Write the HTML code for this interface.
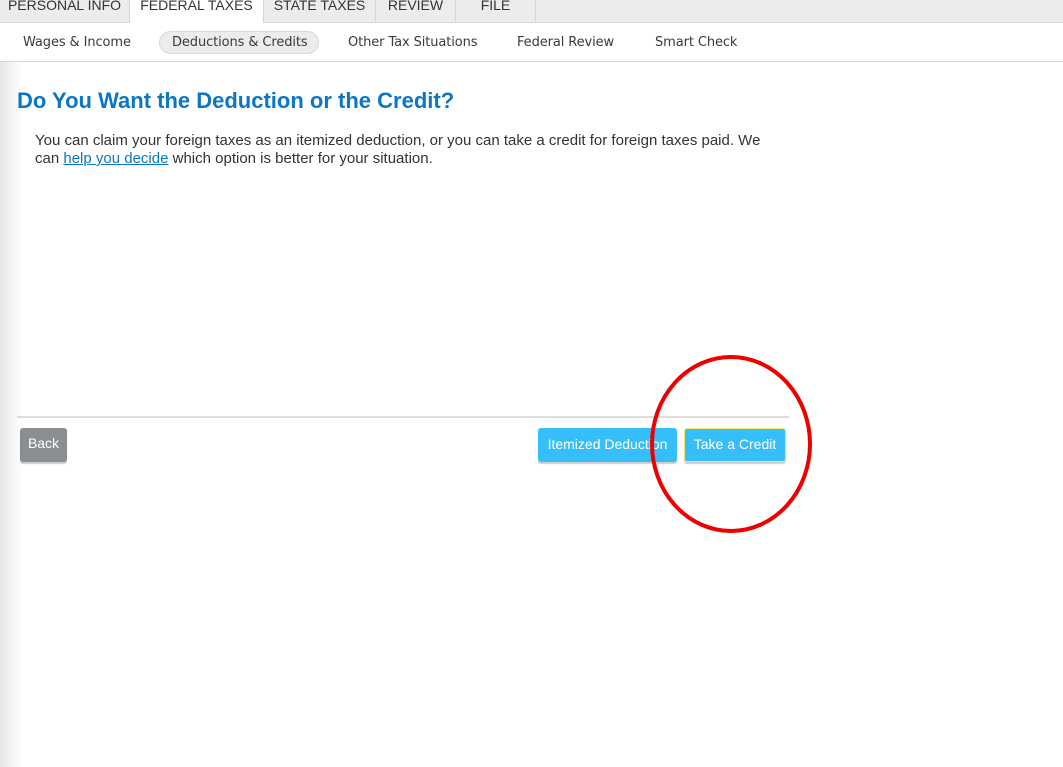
<!DOCTYPE html>
<html><head><meta charset="utf-8"><style>
*{margin:0;padding:0;box-sizing:border-box}
body{width:1063px;height:767px;background:#fff;position:relative;overflow:hidden;font-family:"Liberation Sans",Arial,sans-serif;}
.shade{position:absolute;left:0;top:62px;width:22px;height:705px;background:linear-gradient(to right,#e6e6e6,#fff)}
.topbar{position:absolute;left:0;top:0;width:1063px;height:23px;background:#ececec;border-bottom:1px solid #dcdcdc}
.tab{position:absolute;top:0;height:23px;font-size:14px;color:#333;line-height:11px;text-align:center;border-right:1px solid #d6d6d6}
.tab.active{background:#fff;height:24px}
.sub{position:absolute;left:0;top:23px;width:1063px;height:39px;border-bottom:1px solid #d8d8d8;background:#fff}
.si{position:absolute;top:12px;color:#393a3d;font-family:"DejaVu Sans","Liberation Sans",sans-serif;font-size:13px;letter-spacing:-0.1px}
.pill{position:absolute;left:159px;top:8px;width:160px;height:23px;border-radius:12px;background:#ececec;border:1px solid #d8d8d8}
h1{position:absolute;left:17px;top:88px;font-size:22px;color:#0a77c6;font-weight:bold;font-family:"Liberation Sans",sans-serif;}
p{position:absolute;left:35px;top:132px;width:735px;font-size:15px;line-height:18px;color:#333}
a{color:#0a77c6}
.rule{position:absolute;left:17px;top:416px;width:772px;height:2px;background:#ddd}
.btn{position:absolute;top:428px;height:34px;border-radius:3px;color:#fff;font-size:14px;line-height:33px;text-align:center;box-shadow:0 2px 1px rgba(0,0,0,.2)}
</style></head><body>
<div class="shade"></div>
<div class="topbar">
<div class="tab" style="left:0;width:130px">PERSONAL INFO</div>
<div class="tab active" style="left:130px;width:134px">FEDERAL TAXES</div>
<div class="tab" style="left:264px;width:112px">STATE TAXES</div>
<div class="tab" style="left:376px;width:80px">REVIEW</div>
<div class="tab" style="left:456px;width:80px">FILE</div>
</div>
<div class="sub">
<div class="pill"></div>
<div class="si" style="left:23px">Wages &amp; Income</div>
<div class="si" style="left:172px">Deductions &amp; Credits</div>
<div class="si" style="left:348px">Other Tax Situations</div>
<div class="si" style="left:517px">Federal Review</div>
<div class="si" style="left:655px">Smart Check</div>
</div>
<h1>Do You Want the Deduction or the Credit?</h1>
<p>You can claim your foreign taxes as an itemized deduction, or you can take a credit for foreign taxes paid. We<br>can <a href="#">help you decide</a> which option is better for your situation.</p>
<div class="rule"></div>
<div class="btn" style="left:20px;width:47px;background:#8a8d91;line-height:31px">Back</div>
<div class="btn" style="left:538px;width:139px;background:#36befa">Itemized Deduction</div>
<div class="btn" style="left:684px;width:102px;background:#36befa;border:1px solid #f5e76a;line-height:31px">Take a Credit</div>
<svg style="position:absolute;left:0;top:0" width="1063" height="767"><ellipse cx="731" cy="444" rx="79" ry="87" fill="none" stroke="#e00" stroke-width="4"/></svg>
</body></html>
